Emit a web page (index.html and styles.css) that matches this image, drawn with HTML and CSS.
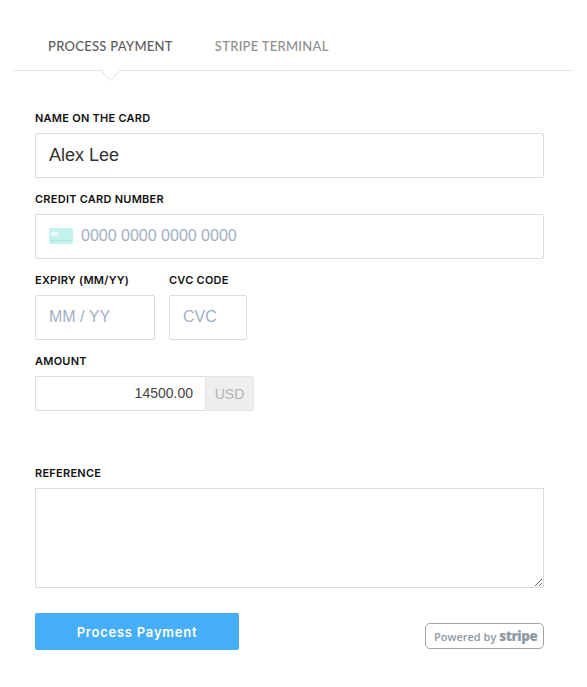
FILE: index.html
```html
<!DOCTYPE html>
<html lang="en">
<head>
<meta charset="utf-8">
<title>Process Payment</title>
<link rel="stylesheet" href="styles.css">
</head>
<body>
<nav class="tabs">
  <a class="tab tab-active">PROCESS PAYMENT</a>
  <a class="tab">STRIPE TERMINAL</a>
</nav>
<form class="form">
  <div class="field">
    <label class="label">NAME ON THE CARD</label>
    <input class="input input-full" value="Alex Lee">
  </div>
  <div class="field">
    <label class="label">CREDIT CARD NUMBER</label>
    <div class="card-input">
      <svg class="card-icon" width="24" height="16" viewBox="0 0 24 16">
        <rect width="24" height="16" rx="1" fill="#c4f3ef"/>
        <rect x="2" y="4" width="7" height="4" fill="#e8fbfa"/>
        <path d="M2 12.5h20" stroke="#9ce3df" stroke-width="1" stroke-dasharray="3 1.5"/>
      </svg>
      <span class="placeholder">0000 0000 0000 0000</span>
    </div>
  </div>
  <div class="row">
    <div class="field">
      <label class="label">EXPIRY (MM/YY)</label>
      <input class="input input-small input-expiry" placeholder="MM / YY">
    </div>
    <div class="field">
      <label class="label">CVC CODE</label>
      <input class="input input-small input-cvc" placeholder="CVC">
    </div>
  </div>
  <div class="field">
    <label class="label">AMOUNT</label>
    <div class="amount">
      <input class="amount-input" value="14500.00">
      <span class="amount-addon">USD</span>
    </div>
  </div>
  <div class="field field-reference">
    <label class="label">REFERENCE</label>
    <textarea class="textarea"></textarea>
  </div>
  <div class="actions">
    <button type="button" class="submit">Process Payment</button>
    <div class="badge"><span class="badge-by">Powered by</span> <span class="badge-stripe">stripe</span></div>
  </div>
</form>
</body>
</html>
```
FILE: styles.css
```css
* { box-sizing: border-box; }
html, body { margin: 0; padding: 0; background: #fff; }
body { height: 687px; overflow: hidden; font-family: "Liberation Sans", Arial, sans-serif; }

.tabs {
  margin: 0 13px;
  height: 71px;
  padding: 38px 0 0 35px;
  display: flex;
  gap: 42px;
  border-bottom: 1px solid #e6e6e6;
  position: relative;
}
.tab {
  font-family: Lato, "Open Sans", sans-serif;
  font-size: 13px;
  line-height: 16px;
  font-weight: 500;
  letter-spacing: 0.28px;
  color: #8f8f8f;
  white-space: nowrap;
}
.tab-active { color: #5c5c5c; }
.tabs::after {
  content: "";
  position: absolute;
  left: 90px;
  top: 63px;
  width: 14px;
  height: 14px;
  background: #fff;
  border-right: 1px solid #e6e6e6;
  border-bottom: 1px solid #e6e6e6;
  transform: rotate(45deg);
}

.form { padding: 40px 43px 0 35px; position: relative; }
.field { margin-bottom: 14px; }
.field-reference { margin-top: 55px; margin-bottom: 25px; }
.label {
  display: block;
  font-family: Inter, sans-serif;
  font-size: 11px;
  line-height: 14px;
  font-weight: 600;
  letter-spacing: 0.25px;
  color: #111;
  margin-bottom: 8px;
}
.input, .card-input {
  display: block;
  height: 45px;
  border: 1px solid #dcdcdc;
  border-radius: 2px;
  padding: 0 13px 1px;
  font-family: "Liberation Sans", Arial, sans-serif;
  font-size: 18px;
  color: #333;
  background: #fff;
  outline: none;
}
.input-small { padding-bottom: 3px; }
.input::placeholder { color: #9fb0c6; opacity: 1; font-size: 16px; }
.input-full, .card-input { width: 100%; }
.input-expiry { width: 120px; }
.input-cvc { width: 78px; }
.card-input { display: flex; align-items: center; gap: 8px; padding-bottom: 2px; }
.card-icon { flex: none; }
.placeholder { color: #9fb0c6; font-size: 16px; }
.row { display: flex; gap: 14px; }

.amount { display: flex; width: 219px; height: 35px; }
.amount-input {
  width: 170px;
  height: 35px;
  border: 1px solid #dcdcdc;
  border-right: 0;
  border-radius: 2px 0 0 2px;
  padding: 0 12px 1px;
  text-align: right;
  font-family: "Liberation Sans", Arial, sans-serif;
  font-size: 14px;
  color: #444;
  outline: none;
}
.amount-addon {
  width: 49px;
  height: 35px;
  display: flex;
  align-items: center;
  justify-content: center;
  padding-top: 1px;
  background: #eee;
  border: 1px solid #e4e4e4;
  border-radius: 0 2px 2px 0;
  font-size: 14px;
  color: #b4b4b4;
}

.textarea {
  display: block;
  width: 100%;
  height: 100px;
  border: 1px solid #dcdcdc;
  border-radius: 0;
  padding: 8px 13px;
  background: #fff;
  outline: none;
}

.actions { display: flex; justify-content: space-between; align-items: flex-start; }
.submit {
  width: 204px;
  height: 37px;
  border: 0;
  border-radius: 2px;
  background: #46aef7;
  color: #fff;
  font-family: Inter, sans-serif;
  font-size: 13px;
  font-weight: 600;
  letter-spacing: 0.77px;
}
.badge {
  margin-top: 10px;
  width: 119px;
  height: 26px;
  border: 1px solid #9aa5ad;
  border-radius: 5px;
  display: flex;
  align-items: center;
  padding-left: 8px;
  gap: 3px;
  color: #8f9aa3;
  font-family: "Open Sans", sans-serif;
  white-space: nowrap;
}
.badge-by { font-size: 11px; font-weight: 600; }
.badge-stripe { font-size: 13.5px; font-weight: 800; letter-spacing: -0.5px; }
```
